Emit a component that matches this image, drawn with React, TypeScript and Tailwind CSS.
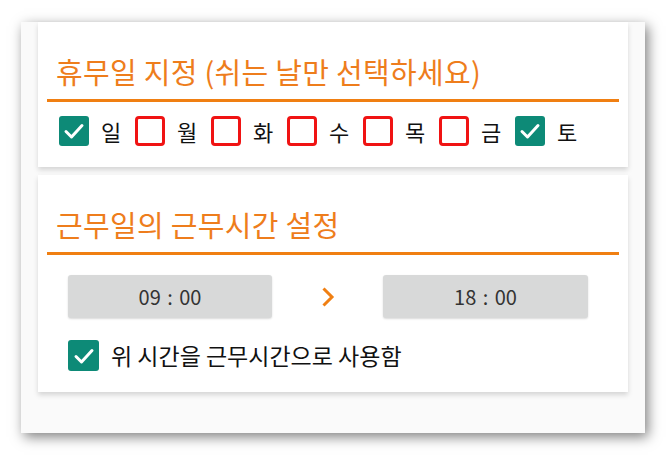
import React from "react";

const days = [
  { label: "일", checked: true },
  { label: "월", checked: false },
  { label: "화", checked: false },
  { label: "수", checked: false },
  { label: "목", checked: false },
  { label: "금", checked: false },
  { label: "토", checked: true },
];

const CheckedBox = ({ size = 30 }: { size?: number }) => (
  <div
    className="flex items-center justify-center rounded-[3px] bg-[#0d8a77]"
    style={{ width: size, height: size }}
  >
    <svg width="22" height="22" viewBox="0 0 22 22" fill="none">
      <path
        d="M3 11.5 L8.5 17 L19 5.5"
        stroke="white"
        strokeWidth="3"
        strokeLinecap="round"
        strokeLinejoin="round"
      />
    </svg>
  </div>
);

const EmptyBox = () => (
  <div className="h-[30px] w-[30px] rounded-[4px] border-[3px] border-[#f01313] bg-white" />
);

const Heading = ({ children }: { children: React.ReactNode }) => (
  <>
    <h2 className="h-[36px] whitespace-nowrap pl-[9px] text-[29px] tracking-[0.3px] leading-[36px] text-[#ee7d1c]">
      {children}
    </h2>
    <div className="mt-[10px] h-[3px] bg-[#f07f12]" />
  </>
);

const TimeBox = ({ value, width }: { value: string; width: string }) => (
  <div
    className={`${width} flex h-[43px] items-center justify-center rounded-[3px] bg-[#d8d9d9] text-[20px] text-[#333] shadow-[0_1px_2px_rgba(0,0,0,0.15)] [word-spacing:2px]`}
  >
    {value}
  </div>
);

export default function App() {
  return (
    <div
      className="h-[456px] w-[666px] bg-white pl-[21px] pt-[22px]"
      style={{ fontFamily: "'Noto Sans CJK KR', 'Noto Sans', sans-serif" }}
    >
      <div className="h-[411px] w-[624px] bg-[#fafafa] px-[17px] shadow-[3px_4px_12px_rgba(0,0,0,0.5)]">
        {/* 휴무일 */}
        <div className="h-[145px] bg-white px-[9px] pt-[31px] shadow-[0_3px_5px_rgba(0,0,0,0.15)]">
          <Heading>휴무일 지정 (쉬는 날만 선택하세요)</Heading>
          <div className="mt-[14px] flex items-center pl-[12px]">
            {days.map((d) => (
              <div key={d.label} className="flex items-center">
                {d.checked ? <CheckedBox /> : <EmptyBox />}
                <span className="ml-[12px] mr-[12px] w-[22px] text-[22px] leading-[30px] text-[#111]">
                  {d.label}
                </span>
              </div>
            ))}
          </div>
        </div>

        {/* 근무시간 */}
        <div className="mt-[8px] h-[217px] bg-white px-[9px] pt-[31px] shadow-[0_3px_5px_rgba(0,0,0,0.15)]">
          <Heading>근무일의 근무시간 설정</Heading>
          <div className="mt-[20px] flex items-center pl-[21px]">
            <TimeBox value="09 : 00" width="w-[204px]" />
            <div className="flex w-[111px] justify-center">
              <svg width="14" height="22" viewBox="0 0 14 22" fill="none">
                <path
                  d="M2.5 2.5 L11 11 L2.5 19.5"
                  stroke="#f07f12"
                  strokeWidth="3"
                  strokeLinejoin="miter"
                />
              </svg>
            </div>
            <TimeBox value="18 : 00" width="w-[205px]" />
          </div>
          <div className="mt-[22px] flex items-center pl-[21px]">
            <CheckedBox size={31} />
            <span className="ml-[12px] text-[23px] leading-[31px] text-[#111]">
              위 시간을 근무시간으로 사용함
            </span>
          </div>
        </div>
      </div>
    </div>
  );
}
